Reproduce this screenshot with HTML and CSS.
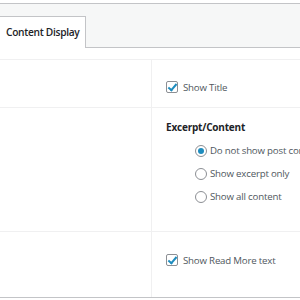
FILE: index.html
```html
<!DOCTYPE html>
<html lang="en">
<head>
    <meta charset="UTF-8">
    <meta name="viewport" content="width=device-width, initial-scale=1.0">
    <title>Content Display</title>
    <link rel="stylesheet" href="styles.css">
</head>
<body>
    <div class="tab-bar">
        <a class="tab active" href="#">Content Display</a>
    </div>

    <div class="settings">
        <div class="row row-title">
            <div class="label-cell"></div>
            <div class="field-cell">
                <label class="check"><input type="checkbox" checked> Show Title</label>
            </div>
        </div>
        <div class="row row-excerpt">
            <div class="label-cell"></div>
            <div class="field-cell">
                <h3 class="field-heading">Excerpt/Content</h3>
                <div class="radio-list">
                    <label class="radio"><input type="radio" name="content" checked> Do not show post content</label>
                    <label class="radio"><input type="radio" name="content"> Show excerpt only</label>
                    <label class="radio"><input type="radio" name="content"> Show all content</label>
                </div>
            </div>
        </div>
        <div class="row row-more">
            <div class="label-cell"></div>
            <div class="field-cell">
                <label class="check"><input type="checkbox" checked> Show Read More text</label>
            </div>
        </div>
    </div>
</body>
</html>
```

FILE: styles.css
```css
body {
    margin: 0;
    background: #fff;
    font-family: "Open Sans", "Noto Sans", sans-serif;
    font-size: 9.7px;
    letter-spacing: -0.2px;
    color: #50575e;
    overflow: hidden;
}

/* Tabs */
.tab-bar {
    margin-top: 3px;
    height: 43px;
    border-top: 1px solid #c3c4c7;
    border-bottom: 1px solid #c3c4c7;
    background: #f6f7f7;
    display: flex;
    align-items: flex-end;
}
.tab {
    margin-left: -1px;
    margin-bottom: -1px;
    width: 87px;
    height: 32px;
    box-sizing: border-box;
    border: 1px solid #c3c4c7;
    border-bottom: none;
    background: #fff;
    color: #1d2327;
    font-weight: 600;
    font-size: 10.2px;
    letter-spacing: -0.3px;
    text-decoration: none;
    padding: 8px 0 0 6px;
    white-space: nowrap;
}

/* Settings table */
.settings {
    margin-top: 11px;
    border-top: 1px solid #f0f0f1;
    border-bottom: 1px solid #c3c4c7;
}
.row {
    display: grid;
    grid-template-columns: 152px 1fr;
    border-bottom: 1px solid #f0f0f1;
}
.row:last-child { border-bottom: none; }
.label-cell { border-right: 1px solid #f0f0f1; }
.field-cell { padding-left: 14px; white-space: nowrap; }

.row-title { height: 47px; }
.row-title .field-cell { padding-top: 21px; }
.row-excerpt { height: 123px; }
.row-excerpt .field-cell { padding-top: 12px; }
.row-more { height: 65px; }
.row-more .field-cell { padding-top: 22px; }

.field-heading {
    margin: 0 0 5px;
    font-size: 10px;
    line-height: 14px;
    font-weight: 700;
    color: #1d2327;
}

.check, .radio {
    display: flex;
    align-items: center;
    height: 12px;
}
.radio-list { padding-left: 29px; }
.radio { height: 23px; }

/* Custom inputs */
input[type="checkbox"], input[type="radio"] {
    appearance: none;
    margin: 0;
    width: 12px;
    height: 12px;
    box-sizing: border-box;
    border: 1px solid #8c8f94;
    background: #fff;
    position: relative;
    flex: none;
}
input[type="checkbox"] {
    border-radius: 2px;
    margin-right: 5px;
}
input[type="checkbox"]:checked::before {
    content: "";
    position: absolute;
    left: 3px;
    top: 0px;
    width: 3px;
    height: 7px;
    border-right: 2px solid #1e8cbe;
    border-bottom: 2px solid #1e8cbe;
    transform: rotate(40deg);
}
input[type="radio"] {
    border-radius: 50%;
    margin-right: 3px;
}
input[type="radio"]:checked::before {
    content: "";
    position: absolute;
    left: 2px;
    top: 2px;
    width: 6px;
    height: 6px;
    border-radius: 50%;
    background: #1e8cbe;
}
```
